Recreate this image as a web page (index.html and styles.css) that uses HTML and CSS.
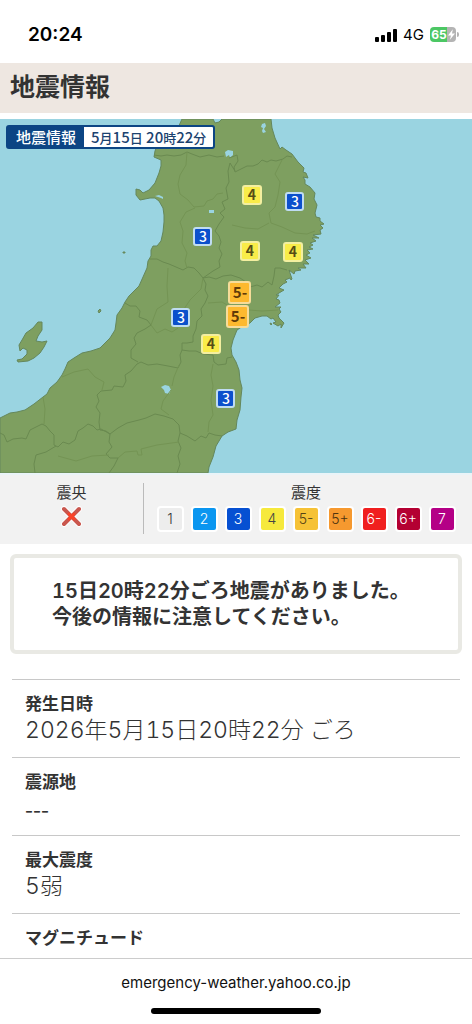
FILE: index.html
```
<!DOCTYPE html>
<html lang="ja">
<head>
    <meta charset="UTF-8">
    <meta name="viewport" content="width=device-width, initial-scale=1.0">
    <title>地震情報</title>
    <link rel="stylesheet" href="styles.css">
</head>
<body>
    <div class="status-bar">
        <span class="time">20:24</span>
        <div class="status-icons">
            <svg class="signal" viewBox="0 0 22 14" aria-hidden="true">
                <rect x="0" y="9" width="4" height="5" rx="1"/>
                <rect x="6" y="7" width="4" height="7" rx="1"/>
                <rect x="12" y="4" width="4" height="10" rx="1"/>
                <rect x="18" y="1" width="4" height="13" rx="1"/>
            </svg>
            <span class="network">4G</span>
            <div class="battery">
                <span>65</span>
                <svg viewBox="0 0 8 12" aria-hidden="true"><path d="M5.5 0 0 7h3.4L2.2 12 8 4.8H4.6z"/></svg>
            </div>
        </div>
    </div>

    <main>
        <header class="page-header">
            <h1>地震情報</h1>
        </header>

        <section class="map">
            <svg class="map-image" viewBox="0 0 472 354" role="img" aria-label="震度の分布">
                <rect class="sea" width="472" height="354"/>
                <!-- Honshu -->
                <path class="land" d="M182 0L178 9 168 18 157 27 155 32 154 38 161 41 161 47 159 54 155 64 149 71 143 74 140 71 136 70 136 76 140 81 145 80 150 79 155 79 159 82 163 89 164 96 164 103 163 113 161 122 157 127 153 127 151 131 151 137 148 142 147 149 143 158 139 167 135 171 129 177 125 183 122 189 117 196 116 204 115 211 110 219 106 223 100 229 91 232 82 234 74 239 68 243 65 250 62 256 57 263 50 269 47 275 43 278 34 285 25 291 17 293 10 294 0 299V354H208L209 348 213 338 216 327 222 317 228 313 236 310 237 301 240 291 241 278 242 269 240 261 239 251 236 243 232 236 231 229 233 221 237 211 243 207 250 204 255 199 262 197 267 197 271 200 273 199 276 203 273 204 278 207 281 205 281 209 284 204 279 199 278 196 281 193 279 190 281 188 275 188 280 184 279 181 276 180 279 176 276 176 279 174 284 171 279 169 283 165 287 163 285 161 290 159 291 161 292 160 289 151 294 155 295 152 301 151 298 149 306 149 303 145 309 145 305 141 311 139 306 136 310 134 307 131 313 130 309 128 313 126 310 124 316 122 312 119 319 119 313 116 321 115 320 111 323 109 320 106 324 105 320 102 320 99 316 98 315 94 317 86 314 80 315 74 310 68 305 65 305 61 303 58 308 59 306 54 303 53 304 49 298 43 292 35 286 31 282 28 280 30 275 19 272 9 271 0H222L219 3 215 4 213 0z"/>
                <!-- Sado, Awashima, Tobishima, islets off Oshika -->
                <path class="land" d="M42 203L38 203 33 209 26 214 22 221 19 226 20 232 23 229 27 231 27 235 22 240 17 241 18 243 28 242 34 239 40 234 44 228 47 222 42 223 36 222 38 217 42 211z"/>
                <path class="land" d="M100 190l1 2-2 2-1-2zM123 133l2 0 0 1-2 0zM270 204l2 1-1 1z"/>
                <!-- lakes -->
                <path class="lake" d="M225 33l3-2 5 1 0 4-3 3-1-3-3 2zM209 91h5v3h-5zM161 268l4-2 4 1 2 4-2 4-4-1-1-3zM155 77l4-1 4 2v2l-2-1zM262 5l3-1 1 3-2 3 2 3-3 1-1-2 1-3-2-1z"/>
                <!-- prefecture borders -->
                <g class="border">
                    <path d="M154 36L161 37 167 36 174 37 181 36 187 33 192 35 200 38 209 36 217 38 224 37M229 39L237 36 238 42 234 48 235 53 241 50 247 47 253 47 258 45 262 41 267 43 271 41 276 42 283 40 287 37 292 38"/>
                    <path d="M235 52L230 44 228 52 229 63 226 69 228 80 222 83 225 90 220 94 224 98 219 105 215 112 219 117 221 123 219 129 222 135 219 142 220 148 213 152 203 159"/>
                    <path d="M150 140L157 140 163 143 169 145 176 148 183 151 188 148 194 149 199 154 203 159 209 158 216 160 223 157 231 156 240 159 246 163 250 168 257 166 262 168 268 163 272 166 274 157 275 149 280 149 287 151"/>
                    <path d="M203 159L206 165 205 171 208 177 205 184 201 190 202 197 197 202 196 210 193 217 193 223 187 224 182 224 182 231 180 236 181 243 178 249 168 247 157 245 148 246 141 243 137 245 131 252 125 256 126 262 123 268 114 267 112 271 101 272 97 276 99 282 96 288 100 294 99 303 100 311 106 312 110 315"/>
                    <path d="M125 184L130 187 136 187 140 192 139 198 147 201 151 206 145 210 137 214 134 219 136 225 131 231 131 239 138 243M182 231L189 232 196 232 203 235 213 236 214 243 218 246 226 245 227 239 232 238"/>
                    <path d="M0 314L4 316 7 323 13 320 22 319 26 320 30 311 36 308 42 305 46 307 50 312 54 316 54 326 58 328 63 323 69 325 75 321 78 312 83 309 88 305 93 307 97 311 101 310 110 315 118 309 127 304 139 301 146 299 155 295 164 297 173 300 179 306 180 314 187 317 195 322 201 317 206 319 209 314 215 316 222 317"/>
                    <path d="M56 327L46 333 36 336 34 345 35 354M110 315L109 323 112 328 106 335 110 339 118 339 114 347 109 354M180 314L178 322 181 329 178 337 180 345 177 354"/>
                </g>
                <!-- area borders -->
                <g class="border area">
                    <path d="M187 33L186 46 180 56 178 65 180 75 188 81 194 88 204 87 207 82 213 80 217 75 223 74M195 89L186 93 180 103 183 112 182 124 187 134 185 142 187 149"/>
                    <path d="M282 41L275 55 280 63 278 76 275 88 269 94 271 104 282 108 295 114 307 115 315 112M232 106L245 109 258 110 269 104"/>
                    <path d="M168 149L167 167 168 183 157 190 154 198 151 206 157 214 165 210 172 213 178 209M203 159L201 170 190 181 184 190M208 184L222 183 234 190 249 191 262 192 278 191"/>
                    <path d="M213 245L211 256 213 267 211 281 213 296 209 303 208 313M179 246L174 258 172 267M171 271L163 282 161 290 169 296"/>
                    <path d="M62 258L74 253 88 250 95 258 104 263 102 271M43 278L45 290 44 305M118 339L125 333 137 332 138 336 142 336 141 330 157 326 179 323M58 337L76 342 92 337 109 336"/>
                </g>
                <!-- observed intensities -->
                <g class="pin yellow">
                    <rect x="243" y="67" width="18" height="18" rx="2"/><text x="252" y="81">4</text>
                    <rect x="241" y="123" width="18" height="18" rx="2"/><text x="250" y="137">4</text>
                    <rect x="284" y="124" width="18" height="18" rx="2"/><text x="293" y="138">4</text>
                    <rect x="202" y="216" width="18" height="18" rx="2"/><text x="211" y="230">4</text>
                </g>
                <g class="pin blue">
                    <rect x="286" y="74" width="17" height="17" rx="2"/><text x="295" y="88">3</text>
                    <rect x="194" y="109" width="17" height="17" rx="2"/><text x="203" y="123">3</text>
                    <rect x="172" y="190" width="17" height="17" rx="2"/><text x="181" y="204">3</text>
                    <rect x="217" y="271" width="17" height="17" rx="2"/><text x="226" y="285">3</text>
                </g>
                <g class="pin orange">
                    <rect x="229" y="163" width="21" height="21" rx="2"/><text x="240" y="179">5-</text>
                    <rect x="227" y="187" width="21" height="21" rx="2"/><text x="238" y="203">5-</text>
                </g>
            </svg>
            <div class="map-label">
                <span class="map-title">地震情報</span>
                <span class="map-date">5<small>月</small>15<small>日</small> 20<small>時</small>22<small>分</small></span>
            </div>
        </section>

        <section class="legend">
            <div class="legend-center">
                <span>震央</span>
                <svg class="cross" viewBox="0 0 24 24" aria-hidden="true">
                    <path class="cross-edge" d="M4 4 19 19M19 4 4 19"/>
                    <path class="cross-line" d="M4 4 19 19M19 4 4 19"/>
                    <path class="cross-core" d="M9 9 14 14M14 9 9 14"/>
                </svg>
            </div>
            <div class="legend-scale">
                <span>震度</span>
                <ul class="scale">
                    <li class="s1">1</li>
                    <li class="s2">2</li>
                    <li class="s3">3</li>
                    <li class="s4">4</li>
                    <li class="s5l">5-</li>
                    <li class="s5u">5+</li>
                    <li class="s6l">6-</li>
                    <li class="s6u">6+</li>
                    <li class="s7">7</li>
                </ul>
            </div>
        </section>

        <p class="message">15日20時22分ごろ地震がありました。<br>今後の情報に注意してください。</p>

        <dl class="details">
            <div class="row">
                <dt>発生日時</dt>
                <dd>2026年5月15日20時22分 ごろ</dd>
            </div>
            <div class="row">
                <dt>震源地</dt>
                <dd class="empty">---</dd>
            </div>
            <div class="row">
                <dt>最大震度</dt>
                <dd>5弱</dd>
            </div>
            <div class="row">
                <dt>マグニチュード</dt>
            </div>
        </dl>
    </main>

    <footer class="browser-bar">
        <a href="#">emergency-weather.yahoo.co.jp</a>
        <div class="home-indicator"></div>
    </footer>
</body>
</html>
```
FILE: styles.css
```
* {
    box-sizing: border-box;
}
body {
    font-family: Inter, "Noto Sans CJK JP", sans-serif;
    margin: 0;
    height: 100vh;
    display: flex;
    flex-direction: column;
    background-color: #fff;
    color: #333;
}
main {
    flex: 1;
    min-height: 0;
    overflow: hidden;
}

/* status bar */
.status-bar {
    display: flex;
    justify-content: space-between;
    align-items: center;
    height: 63px;
    padding: 6px 16px 0 28px;
    color: #000;
}
.time {
    font-size: 19px;
    font-weight: 600;
}
.status-icons {
    display: flex;
    align-items: center;
    gap: 6px;
}
.signal {
    width: 22px;
    height: 14px;
}
.network {
    font-size: 15px;
    font-weight: 400;
}
.battery {
    position: relative;
    display: flex;
    justify-content: center;
    align-items: center;
    gap: 1px;
    width: 26px;
    height: 15px;
    border-radius: 4px;
    background: linear-gradient(to right, #4cc764 65%, #b4b4b4 65%);
    color: #fff;
    font-size: 12px;
    font-weight: 700;
}
.battery svg {
    width: 7px;
    height: 11px;
    fill: #fff;
}
.battery::after {
    content: "";
    position: absolute;
    right: -3px;
    top: 5px;
    width: 2px;
    height: 5px;
    border-radius: 0 2px 2px 0;
    background-color: #b4b4b4;
}

.page-header {
    height: 50px;
    margin-bottom: 6px;
    padding: 0 10px;
    background-color: #eee7e1;
}
h1 {
    margin: 0;
    font-size: 25px;
    line-height: 48px;
    font-weight: 700;
}

/* map */
.map {
    position: relative;
}
.map-image {
    display: block;
    width: 100%;
}
.sea {
    fill: #9ad4e1;
}
.land {
    fill: #7e9f60;
    stroke: #64875c;
    stroke-width: 1;
    stroke-linejoin: round;
}
.lake {
    fill: #9ad4e1;
}
.border {
    fill: none;
    stroke: #6a8a50;
    stroke-width: 1;
    stroke-linejoin: round;
}
.area {
    stroke: #749454;
}
.pin text {
    font-family: "Noto Sans CJK JP", sans-serif;
    font-size: 14px;
    font-weight: 700;
    text-anchor: middle;
}
.pin rect {
    stroke-width: 2;
}
.yellow rect {
    fill: #f9ec49;
    stroke: #f3efa0;
}
.yellow text {
    fill: #554d16;
}
.blue rect {
    fill: #0b50cc;
    stroke: #bfdcf2;
}
.blue text {
    fill: #fff;
    font-weight: 500;
}
.orange rect {
    fill: #fdb92f;
    stroke: #f6dc99;
}
.orange text {
    fill: #5f3a08;
    font-size: 15px;
}
.map-label {
    position: absolute;
    left: 6px;
    top: 6px;
    display: flex;
    height: 24px;
    border: 2px solid #0c4584;
    border-radius: 3px;
    background-color: #fff;
    font-family: "Noto Sans CJK JP", sans-serif;
    line-height: 20px;
    white-space: nowrap;
}
.map-title {
    padding: 0 8px;
    background-color: #0c4584;
    color: #fff;
    font-size: 15px;
    font-weight: 500;
}
.map-date {
    padding: 0 7px;
    color: #1b426f;
    font-size: 15px;
    font-weight: 500;
}
.map-date small {
    font-size: 13px;
}

/* legend */
.legend {
    display: flex;
    align-items: stretch;
    height: 71px;
    padding: 8px 4px 10px 0;
    border-top: 2px solid #eaf4f8;
    background-color: #f2f2f2;
    font-size: 15px;
    line-height: 20px;
}
.legend-center {
    display: flex;
    flex-direction: column;
    align-items: center;
    width: 144px;
    border-right: 1px solid #bbb;
}
.cross {
    width: 24px;
    height: 24px;
    margin-top: 2px;
    fill: none;
    stroke-linecap: round;
}
.cross-edge {
    stroke: #fff;
    stroke-width: 6;
}
.cross-line {
    stroke: #c9574e;
    stroke-width: 4;
}
.cross-core {
    stroke: #fa4228;
    stroke-width: 3;
}
.legend-scale {
    flex: 1;
    display: flex;
    flex-direction: column;
    align-items: center;
}
.scale {
    display: flex;
    gap: 7px;
    margin: 3px 0 0;
    padding: 0;
    list-style: none;
}
.scale li {
    width: 27px;
    height: 26px;
    border: 2px solid #fff;
    border-radius: 4px;
    font-size: 14px;
    font-weight: 300;
    line-height: 22px;
    text-align: center;
    color: #fff;
}
.scale .s1 {
    background-color: #ededed;
    color: #333;
}
.s2 {
    background-color: #0a96f0;
}
.s3 {
    background-color: #0650d2;
}
.scale .s4 {
    background-color: #f6e93c;
    color: #444;
}
.scale .s5l {
    background-color: #f6c236;
    color: #554315;
}
.scale .s5u {
    background-color: #f6992f;
    color: #4d3310;
}
.s6l {
    background-color: #f01f1f;
}
.s6u {
    background-color: #b40032;
}
.s7 {
    background-color: #b40086;
}

.message {
    margin: 10px 10px 25px;
    padding: 20px 16px 20px 38px;
    border: 4px solid #e9e9e4;
    border-radius: 6px;
    font-size: 20px;
    line-height: 26px;
    font-weight: 600;
    font-variant-numeric: tabular-nums;
}

/* details */
.details {
    margin: 0 12px;
}
.row {
    height: 78px;
    padding: 12px 13px 0;
    border-top: 1px solid #c8c8c8;
}
dt {
    font-size: 17px;
    line-height: 24px;
    font-weight: 600;
}
dd {
    margin: 0;
    font-size: 23px;
    line-height: 28px;
    font-weight: 300;
    font-variant-numeric: tabular-nums;
}
.empty {
    font-family: "Noto Sans CJK JP", sans-serif;
    font-weight: 400;
}

/* bottom browser bar */
.browser-bar {
    display: flex;
    flex-direction: column;
    align-items: center;
    justify-content: space-between;
    height: 66px;
    padding: 14px 0 10px;
    border-top: 1px solid #ccc;
    background-color: #fff;
}
.browser-bar a {
    color: #111;
    font-size: 15px;
    line-height: 20px;
    text-decoration: none;
}
.home-indicator {
    width: 36%;
    height: 6px;
    border-radius: 3px;
    background-color: #000;
}
```
